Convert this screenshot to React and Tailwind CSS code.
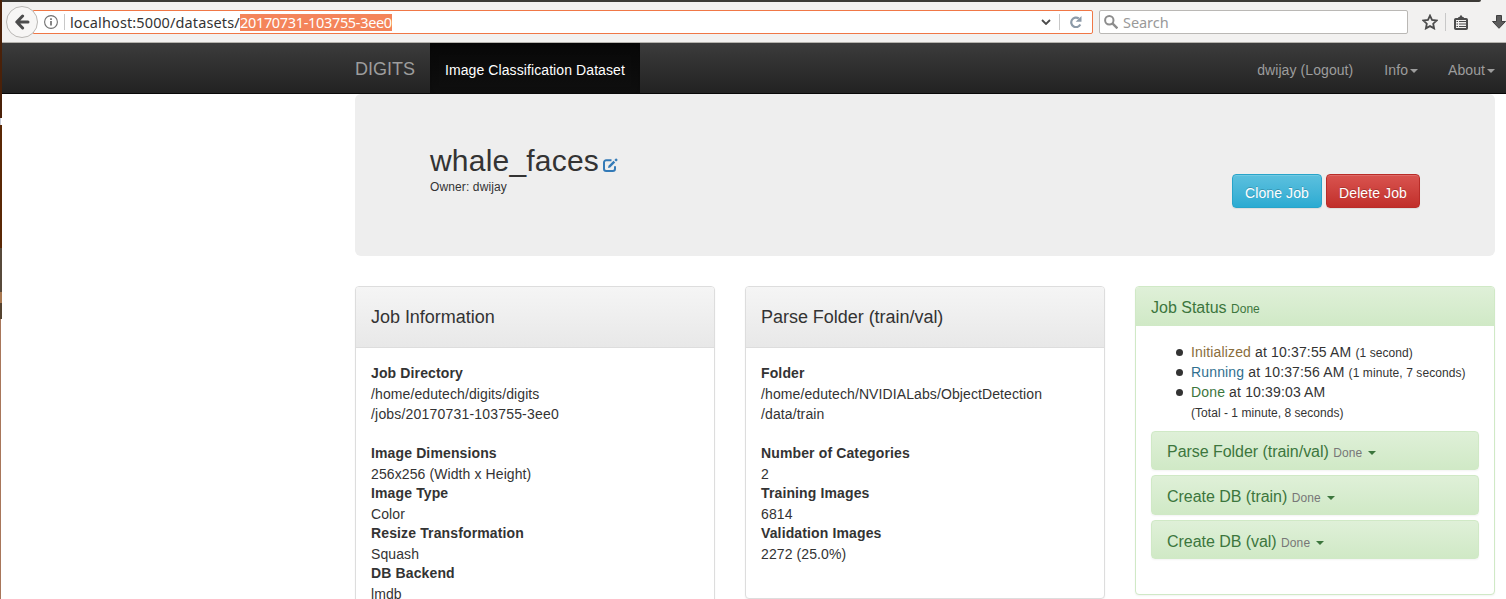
import React from "react";

const Caret = ({ className = "" }) => (
  <svg viewBox="0 0 8 4" className={`inline-block h-1 w-2 align-middle ${className}`} fill="currentColor">
    <path d="M0 0h8L4 4z" />
  </svg>
);

function Toolbar() {
  return (
    <div className="flex h-[43px] w-full shrink-0 flex-col border-b border-[#b5b3ae] bg-[#f2f1f0]">
      <div className="h-[2px] w-[1479px] shrink-0 rounded-br-full bg-[#3c3a36]" />
      <div className="flex h-[40px] shrink-0 items-center pl-[4px]">
        <div className="relative z-10 flex h-8 w-8 shrink-0 items-center justify-center rounded-full border border-[#bab8b5] bg-[#f7f6f5]">
          <svg viewBox="0 0 16 16" className="h-4 w-4" fill="none" stroke="#4c4c4c" strokeWidth="3">
            <path d="M8.6 2 2.8 8l5.8 6M3 8h11" strokeLinejoin="round" strokeLinecap="round" />
          </svg>
        </div>
        <div className="-ml-[5px] flex h-6 w-[1060px] shrink-0 items-center rounded-r-[2px] border border-[#f07746] bg-white pl-[10px]">
          <svg viewBox="0 0 14 14" className="h-[14px] w-[14px] shrink-0" fill="none" stroke="#707070">
            <circle cx="7" cy="7" r="6.4" strokeWidth="1.1" />
            <path d="M7 6v4.5" strokeWidth="1.7" />
            <path d="M7 3.2v1.7" strokeWidth="1.7" />
          </svg>
          <div className="ml-[6px] h-4 w-px shrink-0 bg-[#c8c8c8]" />
          <div className="ml-[5px] flex w-[322px] shrink-0 items-center whitespace-nowrap font-['Noto_Sans',sans-serif] text-[14.5px] leading-[17px] text-[#333]">
            <span className="w-[170px] tracking-[0.12px]">localhost:5000/datasets/</span>
            <span className="h-[17px] w-[152px] bg-[#f4845a] leading-[17px] tracking-[-0.33px] text-white">20170731-103755-3ee0</span>
          </div>
          <svg viewBox="0 0 10 6" className="ml-[649px] h-[6px] w-[10px] shrink-0" fill="none" stroke="#4a4a4a" strokeWidth="1.8">
            <path d="m1 1 4 4 4-4" />
          </svg>
          <div className="ml-[8px] h-4 w-px shrink-0 bg-[#c8c8c8]" />
          <svg viewBox="0 0 12 12" className="ml-[10px] h-3 w-3 shrink-0" fill="none" stroke="#8c9aa8" strokeWidth="2.2">
            <path d="M10.3 8.6A4.8 4.8 0 1 1 8.8 2.4" />
            <path d="M11.5 0v5.8H5.7z" fill="#8c9aa8" stroke="none" />
          </svg>
        </div>
        <div className="ml-[6px] flex h-6 w-[309px] shrink-0 items-center rounded-[2px] border border-[#bab8b5] bg-white pl-1">
          <svg viewBox="0 0 14 14" className="h-[14px] w-[14px] shrink-0" fill="none" stroke="#8d8d8d" strokeWidth="2">
            <circle cx="5.3" cy="5.3" r="4.2" />
            <path d="m8.4 8.4 5 5" strokeWidth="2.4" />
          </svg>
          <span className="ml-[5px] font-['Noto_Sans',sans-serif] text-[14.5px] leading-[18px] tracking-[-0.05px] text-[#999]">Search</span>
        </div>
        <svg viewBox="0 0 16 16" className="ml-[14px] h-4 w-4 shrink-0" fill="none" stroke="#4c4c4c" strokeWidth="1.8">
          <path d="m8 1.6 2 4.3 4.7.6-3.5 3.2.9 4.7L8 12.1l-4.1 2.3.9-4.7L1.3 6.5l4.7-.6z" />
        </svg>
        <div className="ml-[7px] h-[18px] w-px shrink-0 bg-[#c8c8c8]" />
        <svg viewBox="0 0 14 15" className="ml-[8px] h-[15px] w-[14px] shrink-0" fill="none" stroke="#4c4c4c" strokeWidth="2">
          <rect x="1" y="4" width="12" height="10" rx="0.8" />
          <path d="M4 2.5 6 1.500V.5h2v1l2 1V4H4z" fill="#4c4c4c" stroke="none" />
          <path d="M2.500 6.500H4M5 6.500h7M2.500 9H4M5 9h7M2.500 11.500H4M5 11.500h7" strokeWidth="1.200" />
        </svg>
        <svg viewBox="0 0 14 14" className="ml-[24px] h-[14px] w-[14px] shrink-0" fill="#5c5c5c" stroke="#404040">
          <path d="M4.5.5h5v6h4L7 13.3.5 6.5h4z" />
        </svg>
      </div>
    </div>
  );
}

function Navbar() {
  return (
    <nav className="flex h-[51px] w-full shrink-0 items-stretch border-b border-[#080808] bg-linear-to-b from-[#3c3c3c] to-[#222] pl-[353px] text-[#9d9d9d]">
      <div className="w-[75px] pt-[16px] text-[18px] leading-5">DIGITS</div>
      <div className="w-[210px] bg-linear-to-b from-[#080808] to-[#0f0f0f] pl-[15px] pt-[17px] leading-5 tracking-[0.09px] text-white shadow-[inset_0_3px_9px_rgba(0,0,0,0.25)]">
        Image Classification Dataset
      </div>
      <div className="ml-auto flex items-start pt-[17px] leading-5 tracking-[0.08px]">
        <span className="mr-[31px]">dwijay (Logout)</span>
        <span className="mr-[30px]">Info<Caret className="ml-[2px]" /></span>
        <span className="mr-[11px]">About<Caret className="ml-[2px]" /></span>
      </div>
    </nav>
  );
}

function Jumbotron() {
  return (
    <section className="flex h-[162px] w-[1140px] justify-between rounded-[6px] bg-[#eee] px-[75px]">
      <div className="pt-[50px]">
        <h1 className="flex h-[33px] items-center text-[30px] leading-[33px] tracking-[0.2px]">
          whale_faces
          <svg viewBox="0 0 15 14" className="ml-[4px] mt-[9px] h-[14px] w-[15px]" fill="none" stroke="#337ab7" strokeWidth="2">
            <path d="M8.5 2.2H3.2A2.2 2.2 0 0 0 1 4.4v6.4A2.2 2.2 0 0 0 3.2 13h6.6a2.2 2.2 0 0 0 2.2-2.2V8.3" />
            <path d="M5.5 7.8 5 10l2.2-.5 5-5-1.7-1.7z" fill="#337ab7" stroke="none" />
            <path d="m11.4 1.9 1.7 1.7L14.8 2 13.1.3z" fill="#337ab7" stroke="none" />
          </svg>
        </h1>
        <div className="text-[12px] leading-5 tracking-[0.12px]">Owner: dwijay</div>
      </div>
      <div className="flex gap-1 pt-[80px] tracking-[0.1px]">
        <button className="h-[34px] w-[90px] rounded-[4px] border border-[#28a4c9] bg-linear-to-b from-[#5bc0de] to-[#2aabd2] pt-[4px] text-white shadow-[inset_0_1px_0_rgba(255,255,255,0.15),0_1px_1px_rgba(0,0,0,0.075)] [text-shadow:0_-1px_0_rgba(0,0,0,0.2)]">
          Clone Job
        </button>
        <button className="h-[34px] w-[94px] rounded-[4px] border border-[#b92c28] bg-linear-to-b from-[#d9534f] to-[#c12e2a] pt-[4px] text-white shadow-[inset_0_1px_0_rgba(255,255,255,0.15),0_1px_1px_rgba(0,0,0,0.075)] [text-shadow:0_-1px_0_rgba(0,0,0,0.2)]">
          Delete Job
        </button>
      </div>
    </section>
  );
}

function InfoPanel({ title, path, items, className }) {
  return (
    <section className={`w-[360px] shrink-0 rounded-[4px] border border-[#ddd] bg-white shadow-[0_1px_2px_rgba(0,0,0,0.05)] ${className}`}>
      <h3 className="h-[61px] rounded-t-[3px] border-b border-[#ddd] bg-linear-to-b from-[#f5f5f5] to-[#e8e8e8] pl-[15px] pt-[20px] text-[18px] leading-5 tracking-[-0.03px]">
        {title}
      </h3>
      <dl className="px-[15px] pt-[15px] leading-5 tracking-[0.1px]">
        <dt className="font-bold tracking-[0.13px]">{path.label}</dt>
        <dd className="mb-[19px] pt-px">
          {path.lines.map((line) => (
            <div key={line} className={/\d/.test(line) ? "tracking-[0.19px]" : ""}>{line}</div>
          ))}
        </dd>
        {items.map(([label, value]) => (
          <div key={label}>
            <dt className="font-bold tracking-[0.13px]">{label}</dt>
            <dd className="h-5 pt-px">{value}</dd>
          </div>
        ))}
      </dl>
    </section>
  );
}

const history = [
  ["Initialized", "10:37:55 AM", "(1 second)", "text-[#8a6d3b]"],
  ["Running", "10:37:56 AM", "(1 minute, 7 seconds)", "text-[#31708f]"],
  ["Done", "10:39:03 AM", "", "text-[#3c763d]"],
];

const tasks = [
  ["Parse Folder (train/val)", "h-[39px] mb-[5px] pt-[10px]"],
  ["Create DB (train)", "h-[40px] mb-[5px] pt-[11px]"],
  ["Create DB (val)", "h-[39px] pt-[11px]"],
];

function StatusPanel() {
  return (
    <section className="h-[309px] w-[360px] shrink-0 rounded-[4px] border border-[#d0e9c6] bg-white shadow-[0_1px_2px_rgba(0,0,0,0.05)]">
      <h4 className="h-[39px] rounded-t-[3px] bg-linear-to-b from-[#dff0d8] to-[#d0e9c6] pl-[15px] pt-[11px] text-[16px] leading-5 text-[#3c763d]">
        Job Status <small className="text-[12px]">Done</small>
      </h4>
      <div className="px-[15px] pt-4">
        <ul className="leading-5">
          {history.map(([state, time, elapsed, color]) => (
            <li key={state} className="flex h-5 items-center pl-[25px]">
              <span className="mr-[8px] size-[7px] rounded-full bg-[#333]" />
              <span className="whitespace-pre tracking-[0.15px]">
                <span className={color}>{state}</span> at {time} <small className="text-[12px] tracking-[0.08px]">{elapsed}</small>
              </span>
            </li>
          ))}
          <li className="h-5 pl-[40px] pt-px text-[12px] leading-[21px] tracking-[0.04px]">(Total - 1 minute, 8 seconds)</li>
        </ul>
        <div className="mt-[9px]">
          {tasks.map(([name, size]) => (
            <div
              key={name}
              className={`w-[328px] rounded-[4px] border border-[#d0e9c6] bg-linear-to-b from-[#dff0d8] to-[#d0e9c6] pl-[15px] text-[16px] leading-5 tracking-[-0.04px] text-[#3c763d] shadow-[0_1px_2px_rgba(0,0,0,0.05)] ${size}`}
            >
              {name} <small className="text-[12px] tracking-[0.1px] text-[#777]">Done</small>
              <Caret className="ml-[6px]" />
            </div>
          ))}
        </div>
      </div>
    </section>
  );
}

export default function App() {
  return (
    <div className="flex h-[599px] w-[1506px] overflow-hidden bg-white font-['Liberation_Sans',Arial,sans-serif] text-[14px] leading-5 text-[#333]">
      <div className="flex w-[2px] shrink-0 flex-col">
        <div className="h-[118px] bg-[#4a2109]" />
        <div className="h-[7px] w-px bg-[#c5c9d4]" />
        <div className="h-[123px] bg-[#5a2805]" />
        <div className="h-[44px] bg-[#574a3b]" />
        <div className="h-[11px] bg-[#a87850]" />
        <div className="h-[16px] bg-[#54432f]" />
        <div className="w-px grow bg-[#a8765a]" />
      </div>
      <div className="flex w-[1504px] shrink-0 flex-col">
        <Toolbar />
        <Navbar />
        <main className="pl-[353px]">
          <Jumbotron />
          <div className="mt-[30px] flex items-start gap-[30px]">
            <InfoPanel
              className="h-[400px]"
              title="Job Information"
              path={{ label: "Job Directory", lines: ["/home/edutech/digits/digits", "/jobs/20170731-103755-3ee0"] }}
              items={[
                ["Image Dimensions", "256x256 (Width x Height)"],
                ["Image Type", "Color"],
                ["Resize Transformation", "Squash"],
                ["DB Backend", "lmdb"],
              ]}
            />
            <InfoPanel
              className="h-[313px]"
              title="Parse Folder (train/val)"
              path={{ label: "Folder", lines: ["/home/edutech/NVIDIALabs/ObjectDetection", "/data/train"] }}
              items={[
                ["Number of Categories", "2"],
                ["Training Images", "6814"],
                ["Validation Images", "2272 (25.0%)"],
              ]}
            />
            <StatusPanel />
          </div>
        </main>
      </div>
    </div>
  );
}
